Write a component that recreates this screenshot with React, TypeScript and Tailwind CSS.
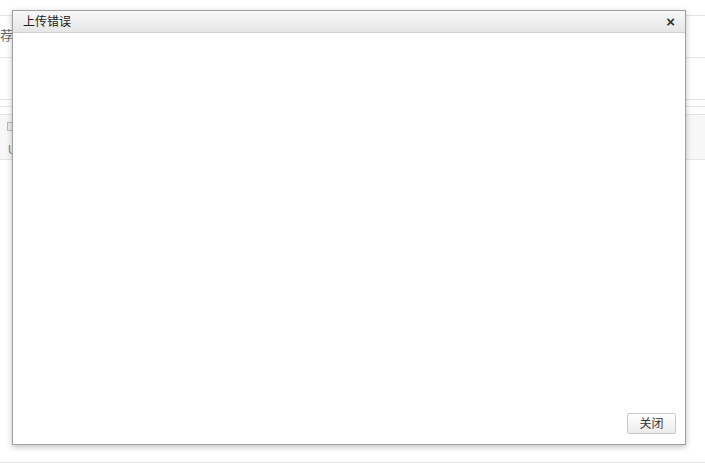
import React from "react";

export default function App() {
  return (
    <div className="relative w-[705px] h-[465px] overflow-hidden bg-white" style={{ fontFamily: '"Liberation Sans", "Noto Sans CJK SC", sans-serif' }}>
      {/* background page */}
      <div className="flex flex-col">
        <div className="h-[15px]" />
        <div className="h-[42px] border-t border-[#e5e5e5] text-[13px] text-[#666] pt-[12px] leading-[16px]">
          <span>荐</span>
        </div>
        <div className="h-[42px] border-t border-[#e5e5e5]" />
        <div className="h-[7px] border-t border-[#e5e5e5]" />
        <div className="h-[8px] border-t border-[#e5e5e5]" />
        <div className="h-[46px] bg-[#f7f7f7] border-y border-[#e5e5e5] flex flex-col pl-[7px] pt-[7px] text-[#999]">
          <div className="w-[8px] h-[9px] border border-[#bbb] bg-[#eee]" />
          <div className="text-[12px] leading-[14px] mt-[12px] ml-[1px] text-[#888]">U</div>
        </div>
        <div className="h-[302px]" />
        <div className="border-t border-[#e5e5e5]" />
      </div>

      {/* dialog */}
      <div className="absolute left-[12px] top-[10px] w-[674px] h-[435px] bg-white border border-[#a0a0a0] shadow-[0_2px_6px_rgba(0,0,0,0.25)] flex flex-col">
        <div className="h-[22px] flex items-center justify-between pl-[10px] pr-[10px] bg-gradient-to-b from-[#f8f8f8] to-[#e6e6e6] border-b border-[#d0d0d0]">
          <span className="text-[12px] text-[#222]">上传错误</span>
          <span className="text-[15px] font-bold text-[#333] leading-none">×</span>
        </div>
        <div className="flex-1" />
        <div className="flex justify-end pr-[9px] pb-[10px]">
          <button className="w-[49px] h-[21px] text-[12px] text-[#333] border border-[#c8c8c8] rounded-[2px] bg-gradient-to-b from-[#ffffff] to-[#ececec]">关闭</button>
        </div>
      </div>
    </div>
  );
}
